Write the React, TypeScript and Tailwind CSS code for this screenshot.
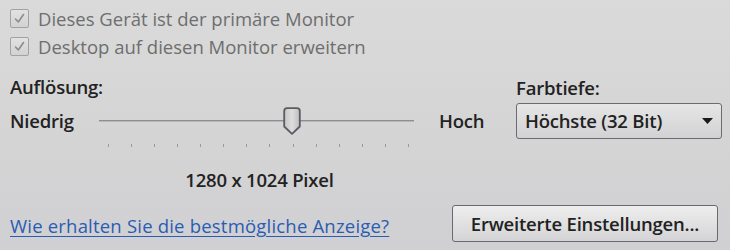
import React from "react";

function Check() {
  return (
    <div className="w-[19px] h-[19px] border border-[#a2a2a2] rounded-[2px] bg-gradient-to-b from-[#e2e2e2] to-[#d2d2d2] flex items-center justify-center shrink-0">
      <svg width="13" height="13" viewBox="0 0 13 13">
        <path d="M2.5 7 L5.3 10 L10.5 2.5" fill="none" stroke="#8c8c8c" strokeWidth="1.6" strokeLinecap="round" strokeLinejoin="round" />
      </svg>
    </div>
  );
}

function Thumb() {
  return (
    <svg width="18" height="28" viewBox="0 0 18 28" className="absolute left-[184px] top-[1px]">
      <defs>
        <linearGradient id="tg" x1="0" y1="0" x2="1" y2="0">
          <stop offset="0" stopColor="#c4c4c4" />
          <stop offset="0.5" stopColor="#dedede" />
          <stop offset="1" stopColor="#bdbdbd" />
        </linearGradient>
      </defs>
      <path d="M4 1.2 H14 Q16.8 1.2 16.8 4 V19.5 L9 26.8 L1.2 19.5 V4 Q1.2 1.2 4 1.2 Z" fill="url(#tg)" stroke="#5a5c62" strokeWidth="1.8" strokeLinejoin="round" />
    </svg>
  );
}

export default function App() {
  const ticks = Array.from({ length: 14 });
  return (
    <div className="w-[730px] h-[250px] overflow-hidden bg-gradient-to-b from-[#dadada] to-[#d0d0d2] font-['Open_Sans',sans-serif] text-[18.5px] text-[#222] pl-[10px] pt-[9px]">
      <div className="flex flex-col gap-[9px] text-[#6e6e6e]">
        <div className="flex items-center gap-[9px] h-[19px]">
          <Check />
          <span>Dieses Gerät ist der primäre Monitor</span>
        </div>
        <div className="flex items-center gap-[9px] h-[19px]">
          <Check />
          <span>Desktop auf diesen Monitor erweitern</span>
        </div>
      </div>

      <div className="flex mt-[19px]">
        <div className="flex flex-col w-[506px]">
          <div className="h-[24px] leading-[24px] font-semibold tracking-[-0.2px]">Auflösung:</div>
          <div className="flex items-center h-[30px] mt-[7px]">
            <div className="w-[89px] font-semibold tracking-[-0.2px]">Niedrig</div>
            <div className="relative w-[315px] h-[30px]">
              <div className="absolute left-0 right-0 top-[14px] h-[2px] bg-[#8e8e90] border-b border-[#b8b8ba]" />
              <Thumb />
            </div>
            <div className="ml-[25px] font-semibold tracking-[-0.2px]">Hoch</div>
          </div>
          <div className="flex justify-between ml-[98px] w-[301px] mt-[8px] h-[3px]">
            {ticks.map((_, i) => (
              <div key={i} className="w-[1px] h-[3px] bg-[#9a9a9a]" />
            ))}
          </div>
          <div className="ml-[89px] w-[321px] text-center h-[24px] leading-[24px] mt-[21px] font-semibold tracking-[-0.2px]">
            1280 x 1024 Pixel
          </div>
        </div>
        <div className="flex flex-col w-[206px] mt-[1px]">
          <div className="h-[24px] leading-[24px] font-semibold tracking-[-0.2px]">Farbtiefe:</div>
          <div className="mt-[3px] h-[36px] border border-[#6c6c70] rounded-[3px] bg-gradient-to-b from-[#e6e6e6] to-[#d2d2d4] flex items-center pl-[8px] pr-[8px] font-semibold tracking-[-0.2px]">
            <span className="flex-1">Höchste (32 Bit)</span>
            <svg width="11" height="6" viewBox="0 0 11 6">
              <path d="M0 0 H11 L5.5 6 Z" fill="#1a1a1a" />
            </svg>
          </div>
        </div>
      </div>

      <div className="flex items-start mt-[13px]">
        <a className="w-[442px] mt-[9px] h-[24px] leading-[24px] text-[#2a5cb3] underline underline-offset-[3px] tracking-[0.2px]">
          Wie erhalten Sie die bestmögliche Anzeige?
        </a>
        <div className="w-[266px] h-[37px] border border-[#6a6a6e] rounded-[3px] bg-gradient-to-b from-[#eeeeee] to-[#d4d4d6] flex items-center justify-center font-semibold tracking-[-0.2px]">
          Erweiterte Einstellungen...
        </div>
      </div>
    </div>
  );
}
